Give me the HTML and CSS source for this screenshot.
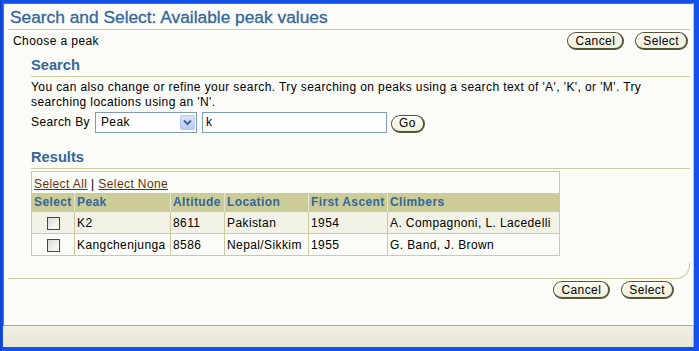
FILE: index.html
```html
<!DOCTYPE html>
<html>
<head>
<meta charset="utf-8">
<link rel="stylesheet" href="styles.css">
</head>
<body>
<div class="window">
  <div class="page">
    <h1 class="title">Search and Select: Available peak values</h1>
    <div class="toprow">
      <span class="hint">Choose a peak</span>
      <div class="btns">
        <button class="btn">Cancel</button>
        <button class="btn">Select</button>
      </div>
    </div>
    <div class="section">
      <h2 class="subhead">Search</h2>
      <p class="desc">You can also change or refine your search. Try searching on peaks using a search text of 'A', 'K', or 'M'. Try searching locations using an 'N'.</p>
      <div class="searchrow">
        <span class="lbl">Search By</span>
        <div class="select">
          <span class="selval">Peak</span>
          <span class="arrow"><svg width="9" height="7" viewBox="0 0 9 7"><path d="M1 1.5 L4.5 5 L8 1.5" fill="none" stroke="#4d6185" stroke-width="2"/></svg></span>
        </div>
        <div class="input">k</div>
        <button class="btn go">Go</button>
      </div>
      <h2 class="subhead results">Results</h2>
      <table class="grid">
        <colgroup>
          <col style="width:43px"><col style="width:96px"><col style="width:54px"><col style="width:84px"><col style="width:79px"><col style="width:172px">
        </colgroup>
        <tr class="tools"><td colspan="6"><a class="lnk">Select All</a> | <a class="lnk">Select None</a></td></tr>
        <tr class="head"><th>Select</th><th>Peak</th><th>Altitude</th><th>Location</th><th>First Ascent</th><th>Climbers</th></tr>
        <tr class="band"><td class="chk"><span class="box"></span></td><td>K2</td><td>8611</td><td>Pakistan</td><td>1954</td><td>A. Compagnoni, L. Lacedelli</td></tr>
        <tr><td class="chk"><span class="box"></span></td><td>Kangchenjunga</td><td>8586</td><td>Nepal/Sikkim</td><td>1955</td><td>G. Band, J. Brown</td></tr>
      </table>
    </div>
    <div class="footline"></div>
    <div class="bottomrow">
      <button class="btn">Cancel</button>
      <button class="btn">Select</button>
    </div>
  </div>
  <div class="status"><div class="statcell"></div></div>
</div>
</body>
</html>
```
FILE: styles.css
```css
html, body {
  margin: 0;
  padding: 0;
  background: #0b3fd6;
}
body {
  font-family: "Liberation Sans", Arial, sans-serif;
  font-size: 12px;
  letter-spacing: 0.4px;
  color: #000;
}
.window {
  width: 699px;
  height: 351px;
  box-sizing: border-box;
  padding: 3px 5px 4px 3px;
  display: flex;
  flex-direction: column;
  background: linear-gradient(90deg, #0a3bc4 0, #1352e8 2px, #1352e8 100%);
}
.page {
  flex: 1;
  background: #fbfbf8;
  border-top: 1px solid #716f64;
  border-left: 1px solid #716f64;
  border-right: 1px solid #c9c6b8;
  border-bottom: 1px solid #aca899;
  padding-top: 3px;
  display: flex;
  flex-direction: column;
}
.title {
  margin: 0 3px 0 4px;
  padding: 0 0 2px 2px;
  font-size: 17.33px;
  line-height: 20px;
  font-weight: normal;
  letter-spacing: 0;
  -webkit-text-stroke: 0.3px #336699;
  color: #336699;
  border-bottom: 1px solid #cccc99;
}
.toprow {
  display: flex;
  justify-content: space-between;
  align-items: center;
  height: 18px;
  padding: 2px 5px 0 9px;
}
.btns {
  display: flex;
  gap: 11px;
}
.btn {
  font-family: "Liberation Sans", Arial, sans-serif;
  font-size: 12px;
  letter-spacing: 0.4px;
  color: #000;
  height: 18px;
  padding: 0 7px;
  line-height: 14px;
  border: 1px solid #55553a;
  border-right-width: 2px;
  border-bottom-width: 2px;
  border-radius: 9px;
  background: linear-gradient(#fbfbf1, #efefdc);
  box-shadow: inset 1px 1px 0 #ffffff;
}
.section {
  margin: 7px 3px 0 27px;
}
.subhead {
  margin: 0;
  padding-bottom: 2px;
  font-size: 14.67px;
  line-height: 17px;
  font-weight: bold;
  letter-spacing: 0;
  color: #336699;
  border-bottom: 1px solid #cccc99;
}
.desc {
  margin: 3px 0 0 0;
  line-height: 15px;
}
.searchrow {
  display: flex;
  align-items: center;
  margin-top: 1px;
  height: 22px;
}
.lbl {
  margin-right: 5px;
}
.select {
  width: 99px;
  height: 19px;
  border: 1px solid #7f9db9;
  background: #fff;
  display: flex;
  align-items: center;
  justify-content: space-between;
  padding-right: 1px;
}
.selval {
  padding-left: 5px;
}
.arrow {
  width: 15px;
  height: 15px;
  border: 1px solid #b6c9f3;
  border-radius: 2px;
  box-sizing: border-box;
  background: linear-gradient(#dbe5fd, #b5c9f7);
  display: flex;
  align-items: center;
  justify-content: center;
}
.input {
  margin-left: 5px;
  width: 180px;
  height: 19px;
  border: 1px solid #7f9db9;
  background: #fff;
  padding-left: 3px;
  line-height: 19px;
}
.go {
  margin-left: 4px;
  margin-top: 3px;
  padding: 0 7px;
}
.results {
  margin-top: 16px;
}
.grid {
  margin-top: 2px;
  border-collapse: collapse;
  table-layout: fixed;
  width: 528px;
  border: 1px solid #cccc99;
}
.grid td, .grid th {
  padding: 0 2px;
  white-space: nowrap;
  overflow: hidden;
  text-align: left;
}
.tools td {
  height: 18px;
  padding-top: 3px;
  background: #fbfbf8;
}
.lnk {
  color: #663300;
  text-decoration: underline;
}
.head th {
  background: #cccc99;
  color: #336699;
  font-weight: bold;
  height: 18px;
  border-left: 1px solid #e6e6cc;
}
.head th:first-child {
  border-left: none;
}
.grid td {
  height: 21px;
  border: 1px solid #cccc99;
  background: #fbfbf8;
}
.grid .band td {
  background: #f2f2e6;
}
.grid .tools td {
  border-bottom: none;
  height: 18px;
}
.chk {
  text-align: center !important;
}
.box {
  display: inline-block;
  width: 11px;
  height: 11px;
  border: 1px solid #1c5180;
  background: linear-gradient(135deg, #dcdcd4, #ffffff);
  vertical-align: middle;
}
.footline {
  margin: 7px 3px 0 4px;
  height: 15px;
  border-bottom: 1px solid #cccc99;
  border-right: 1px solid #cccc99;
  border-bottom-right-radius: 14px;
}
.bottomrow {
  display: flex;
  justify-content: flex-end;
  gap: 11px;
  margin: 2px 19px 0 0;
}
.status {
  height: 21px;
  background: linear-gradient(#f1efe2, #e9e6d5);
  display: flex;
  justify-content: flex-end;
}
.statcell {
  width: 1px;
  background: #aca899;
}
```
